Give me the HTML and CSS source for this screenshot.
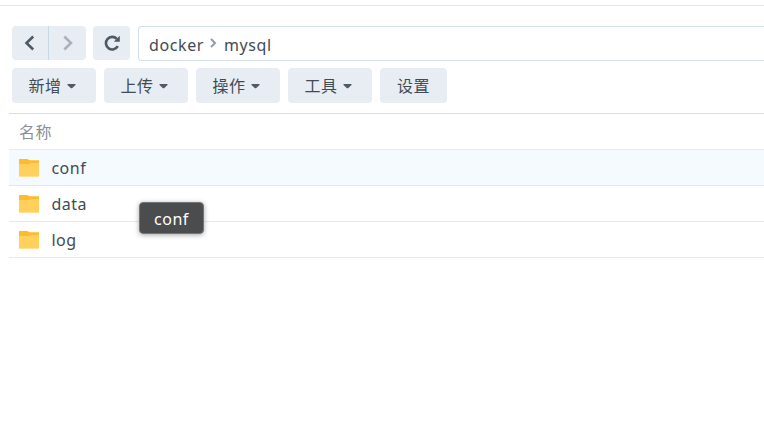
FILE: index.html
```
<!DOCTYPE html>
<html lang="zh-CN">
<head>
<meta charset="utf-8">
<title>mysql</title>
<link rel="stylesheet" href="styles.css">
</head>
<body>
<main class="station">
  <nav class="nav">
    <div class="history">
      <button class="btn back" aria-label="后退"><svg width="12" height="16" viewBox="0 0 12 16"><path d="M9.2 1.5 2.5 8l6.7 6.5"/></svg></button>
      <button class="btn forward" aria-label="前进"><svg width="12" height="16" viewBox="0 0 12 16"><path d="M2.3 1.5 9 8l-6.7 6.5"/></svg></button>
    </div>
    <button class="btn refresh" aria-label="刷新"><svg width="16" height="16" viewBox="0 0 16 16"><path d="M13.8 11.2A6.3 6.3 0 1 1 12.8 3.8"/><path class="head" d="M15.8.8v6H9.8l2-2 2-2z"/></svg></button>
    <div class="path"><span>docker</span><svg width="7" height="10" viewBox="0 0 7 10"><path d="M1 1l4 4-4 4"/></svg><span>mysql</span></div>
  </nav>
  <div class="toolbar">
    <button class="btn menu">新增<svg class="caret" width="9" height="5" viewBox="0 0 9 5"><path d="M.5 0h8v1L5.3 3.9q-.8.5-1.6 0L.5 1z"/></svg></button>
    <button class="btn menu">上传<svg class="caret" width="9" height="5" viewBox="0 0 9 5"><path d="M.5 0h8v1L5.3 3.9q-.8.5-1.6 0L.5 1z"/></svg></button>
    <button class="btn menu">操作<svg class="caret" width="9" height="5" viewBox="0 0 9 5"><path d="M.5 0h8v1L5.3 3.9q-.8.5-1.6 0L.5 1z"/></svg></button>
    <button class="btn menu">工具<svg class="caret" width="9" height="5" viewBox="0 0 9 5"><path d="M.5 0h8v1L5.3 3.9q-.8.5-1.6 0L.5 1z"/></svg></button>
    <button class="btn setting">设置</button>
  </div>
  <section class="list">
    <div class="row header">名称</div>
    <div class="row active"><svg class="folder" width="20" height="18" viewBox="0 0 20 18"><path class="tab" d="M0 0h8l3 1.3h9v10H0z"/><path class="front" d="M0 5h10l2-1h8v14H0z"/><path class="edge" d="M0 17h20v1H0z"/></svg>conf</div>
    <div class="row"><svg class="folder" width="20" height="18" viewBox="0 0 20 18"><path class="tab" d="M0 0h8l3 1.3h9v10H0z"/><path class="front" d="M0 5h10l2-1h8v14H0z"/><path class="edge" d="M0 17h20v1H0z"/></svg>data</div>
    <div class="row"><svg class="folder" width="20" height="18" viewBox="0 0 20 18"><path class="tab" d="M0 0h8l3 1.3h9v10H0z"/><path class="front" d="M0 5h10l2-1h8v14H0z"/><path class="edge" d="M0 17h20v1H0z"/></svg>log</div>
  </section>
</main>
<div class="tooltip">conf</div>
</body>
</html>
```
FILE: styles.css
```
* { box-sizing: border-box; }
body {
  margin: 0;
  height: 432px;
  overflow: hidden;
  background: #fff;
  color: #414b55;
  font: 16px/24px "Noto Sans", "Noto Sans CJK SC", sans-serif;
}
.station { margin-top: 5px; border-top: 1px solid #e1e8f0; padding-top: 20px; }
.nav { display: flex; height: 35px; padding-left: 12px; }
.btn {
  display: flex;
  align-items: center;
  justify-content: center;
  height: 34px;
  padding: 0;
  border: 0;
  border-radius: 4px;
  background: #e8edf4;
  color: #414b55;
  font: inherit;
}
.btn path { fill: none; stroke: #505a64; stroke-width: 2.6; }
.history { display: flex; margin-right: 7px; }
.back { width: 37px; border-right: 1px solid #c8d9e6; border-radius: 4px 0 0 4px; }
.forward { width: 37px; border-radius: 0 4px 4px 0; }
.forward path { stroke: #abb1b9; }
.refresh { width: 37px; margin-right: 8px; }
.refresh .head { fill: #505a64; stroke: none; }
.path {
  display: flex;
  align-items: center;
  flex: 1;
  padding: 2px 0 0 10px;
  border: 1px solid #d3e0eb;
  border-right: 0;
  border-radius: 4px 0 0 4px;
  letter-spacing: .6px;
}
.path svg { margin: -4px 7px 0 6px; }
.path path { fill: none; stroke: #929ca6; stroke-width: 2; }
.toolbar { display: flex; gap: 8px; padding: 7px 0 10px 12px; }
.toolbar .btn { height: 35px; padding-top: 1px; letter-spacing: .4px; }
.toolbar .menu { width: 84px; justify-content: flex-start; padding-left: 16.6px; }
.setting { width: 67px; }
.toolbar .caret { margin-left: 5.6px; }
.toolbar .caret path { fill: #505a64; stroke: none; }
.list { margin-left: 9px; border-top: 1px solid #d3e0eb; }
.row {
  display: flex;
  align-items: center;
  height: 36px;
  padding-left: 10px;
  border-bottom: 1px solid #e6ebf0;
  letter-spacing: .5px;
}
.header { color: #8c9096; }
.active { background: #f4faff; border-color: #dfe9f1; }
.folder { margin-right: 12.4px; }
.tab { fill: #fdbb2d; }
.front { fill: #ffd05b; }
.edge { fill: #ffdf90; }
.tooltip {
  position: absolute;
  left: 139px;
  top: 202px;
  width: 65px;
  height: 32px;
  padding-top: 4px;
  border: 1px solid #74777a;
  border-radius: 4px;
  background: rgba(65, 66, 67, .95);
  box-shadow: 0 1px 5px rgba(0, 0, 0, .35);
  color: #fff;
  text-align: center;
  letter-spacing: .5px;
}
```
